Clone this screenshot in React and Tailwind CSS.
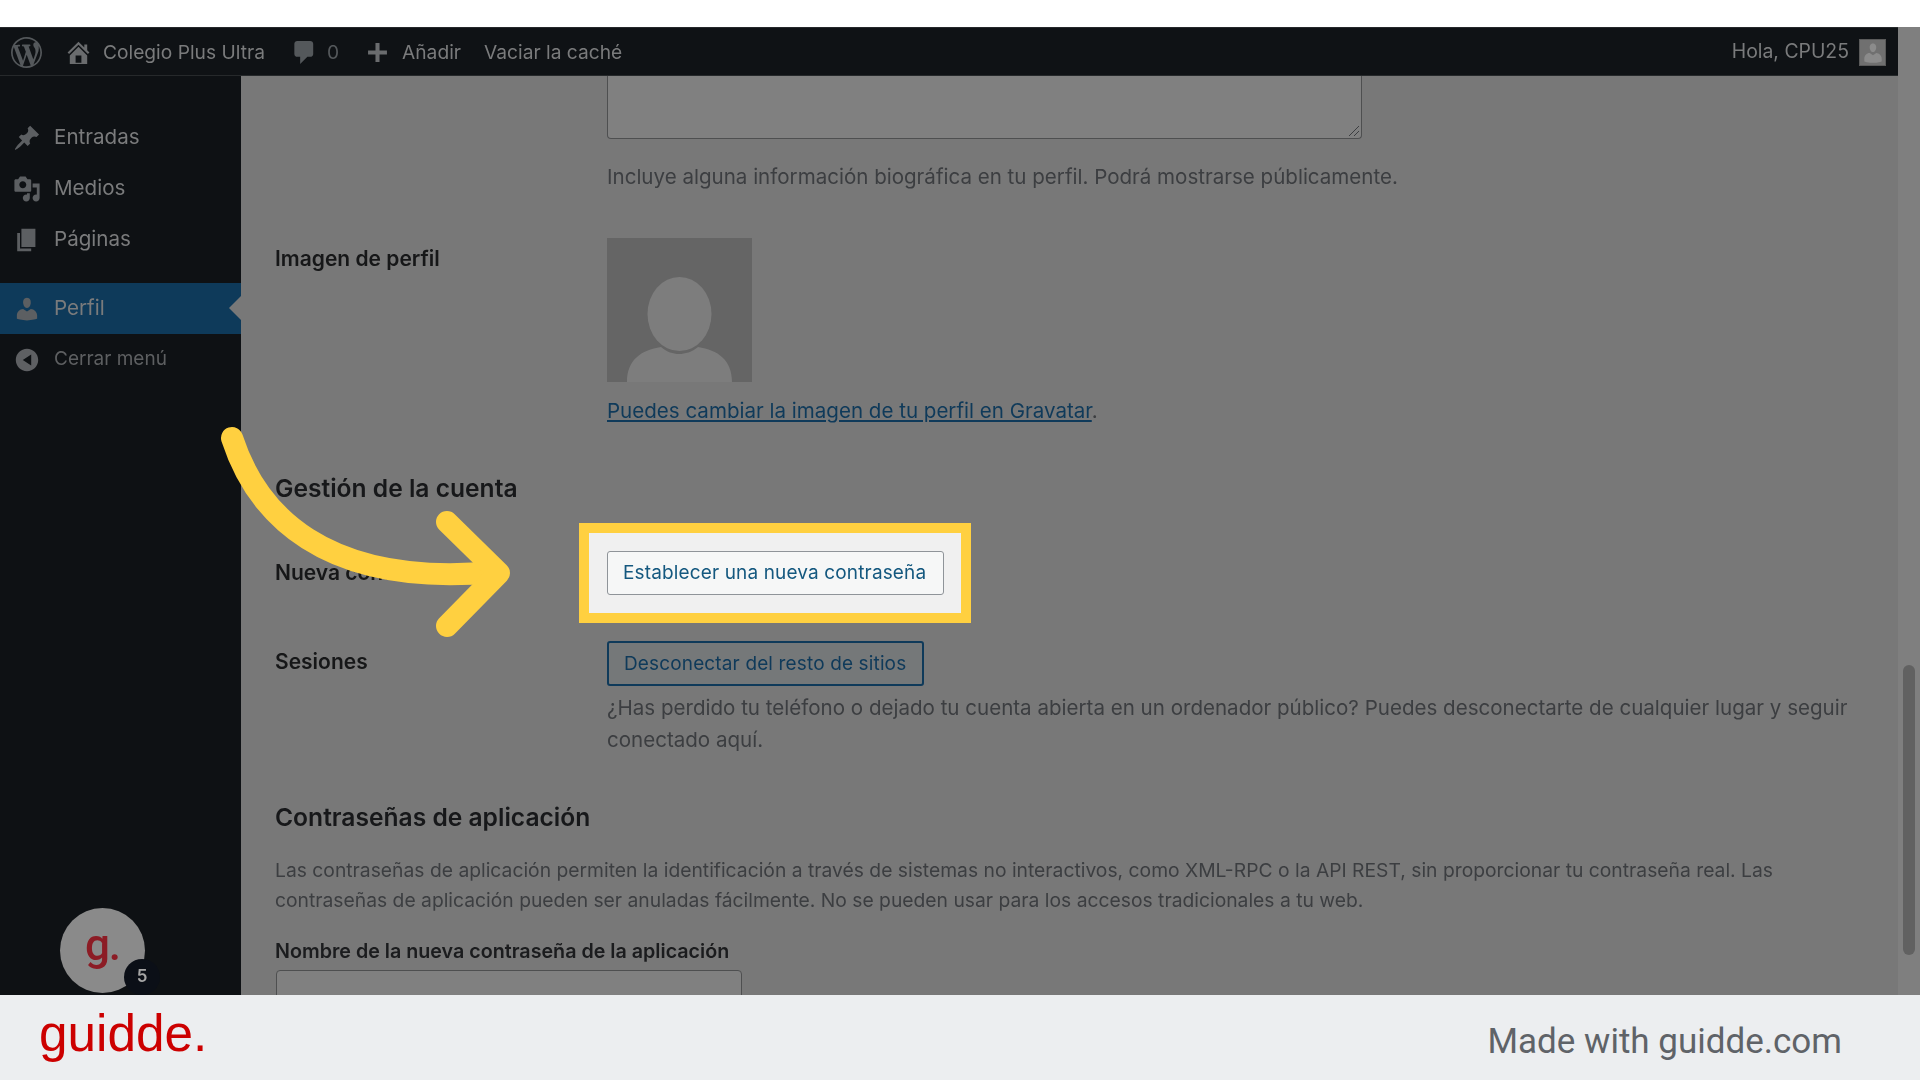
const D = ({ d, className }) => (
  <svg viewBox="0 0 20 20" className={className} fill="currentColor"><path d={d} /></svg>
);
const icons = {
  home: "M16 8.5l1.53 1.53-1.06 1.06L10 4.62l-6.47 6.47-1.06-1.06L10 2.5l4 4v-2h2v4zm-6-2.46l6 5.99V18H4v-5.97zM12 17v-5H8v5h4z",
  comment: "M5 2h9c1.1 0 2 .9 2 2v7c0 1.1-.9 2-2 2h-2l-5 5v-5H5c-1.1 0-2-.9-2-2V4c0-1.1.9-2 2-2z",
  plus: "M17 8.5v3h-5.500V17h-3v-5.500H3v-3h5.500V3h3v5.500H17z",
  post: "M10.44 3.02l1.82-1.82 6.36 6.35-1.83 1.82c-1.05-.68-2.48-.57-3.41.36l-.75.75c-.92.93-1.04 2.35-.35 3.41l-1.83 1.82-2.41-2.41-2.8 2.79c-.42.42-3.38 2.71-3.8 2.29s1.86-3.39 2.28-3.81l2.79-2.79L4.1 9.36l1.83-1.82c1.05.69 2.48.57 3.4-.36l.75-.75c.93-.92 1.05-2.35.36-3.41z",
  media: "M13 11V4c0-.55-.45-1-1-1h-1.67L9 1H5L3.67 3H2c-.55 0-1 .45-1 1v7c0 .55.45 1 1 1h10c.55 0 1-.45 1-1zM7 4.5c1.38 0 2.5 1.12 2.5 2.5S8.38 9.5 7 9.5 4.5 8.38 4.5 7 5.62 4.5 7 4.5zM14 6h5v10.5c0 1.38-1.12 2.5-2.5 2.5S14 17.88 14 16.5s1.12-2.5 2.5-2.5c.17 0 .34.02.5.05V9h-3V6zm-4 8.05V13h2v3.5c0 1.38-1.12 2.5-2.5 2.5S7 17.88 7 16.5 8.12 14 9.5 14c.17 0 .34.02.5.05z",
  page: "M6 15V2h10v13H6zm-1 1h8v2H3V5h2v11z",
  user: "M10 9.25c-2.27 0-2.73-3.44-2.73-3.44C7 4.02 7.82 2 9.97 2c2.16 0 2.98 2.02 2.71 3.81 0 0-.41 3.44-2.68 3.44zm0 2.57L12.72 10c2.39 0 4.52 2.33 4.52 4.53v2.49s-3.65 1.13-7.24 1.13c-3.65 0-7.24-1.13-7.24-1.13v-2.49c0-2.25 1.94-4.53 4.47-4.53z",
  collapse: "M18 10c0-4.42-3.58-8-8-8s-8 3.58-8 8 3.58 8 8 8 8-3.58 8-8zm-5-4v8l-6-4z",
};

const Wp = ({ className }) => (
  <svg viewBox="0 0 20 20" className={className} fill="currentColor">
    <path d="M20 10c0-5.510-4.490-10-10-10C4.480 0 0 4.490 0 10c0 5.520 4.480 10 10 10 5.510 0 10-4.480 10-10zM7.780 15.370L4.370 6.220c.550-.020 1.170-.080 1.170-.080.500-.060.440-1.130-.060-1.110 0 0-1.450.110-2.370.110-.180 0-.370 0-.580-.010C4.120 2.690 6.890 1.050 10 1.050c2.320 0 4.430.870 6.020 2.340-.680-.110-1.650.390-1.650 1.580 0 .740.450 1.360.900 2.100.350.610.550 1.360.550 2.460 0 1.490-1.400 5-1.400 5l-3.030-8.370c.540-.020.820-.170.820-.170.500-.050.440-1.250-.060-1.220 0 0-1.440.120-2.380.120-.870 0-2.330-.120-2.330-.120-.500-.030-.560 1.200-.060 1.220l.920.080 1.260 3.410zM17.410 10c.240-.640.740-1.870.430-4.250.700 1.290 1.050 2.710 1.050 4.250 0 3.290-1.730 6.240-4.400 7.780.970-2.590 1.940-5.200 2.920-7.780zM6.100 18.090C3.120 16.650 1.110 13.530 1.110 10c0-1.300.230-2.480.720-3.590C3.250 10.300 4.670 14.200 6.100 18.090zm4.030-6.630l2.580 6.980c-.860.290-1.760.450-2.710.450-.790 0-1.570-.110-2.290-.330.810-2.370 1.630-4.740 2.420-7.100z" />
  </svg>
);

function MenuItem({ icon, label, active, muted }) {
  return (
    <div className={`flex items-center h-[51px] pl-[13px] ${active ? "bg-[#0e3a5a] relative" : ""}`}>
      <D d={icons[icon]} className={`w-[28px] h-[28px] ${muted ? "text-[#5e6063]" : "text-[#5c5f62]"}`} />
      <span className={`ml-[13px] ${muted ? "text-[19px] text-[#5d5f61]" : "text-[20.6px] text-[#7a7b7c]"}`}>{label}</span>
      {active && (
        <span className="absolute right-0 top-[13px] w-0 h-0 border-y-[12px] border-y-transparent border-r-[12px] border-r-[#787878]" />
      )}
    </div>
  );
}

const Btn = ({ children, light }) => (
  <div className={`flex items-center px-[15px] pt-[1px] text-[19px] tracking-[0.14px] rounded-[3px] border whitespace-nowrap ${
    light ? "h-[44px] w-[337px] bg-[#f6f7f7] border-[#8f9499] text-[#14587f]" : "h-[45px] w-[317px] bg-[#757879] border-[#0f3a5a] border-2 text-[#0f3a5a]"
  }`}>{children}</div>
);

export default function App() {
  return (
    <div className="w-[1920px] h-[1080px] flex flex-col overflow-hidden bg-white font-['Inter',sans-serif]">
      <div className="h-[27px] shrink-0 bg-white" />
      <div className="flex h-[968px] shrink-0">
        <div className="w-[1898px] relative bg-[#787878]">
          <div className="flex flex-col h-full blur-[0.5px]">
            <div className="h-[49px] shrink-0 bg-[#0f1215] flex items-center text-[#7a7b7c] text-[19.2px] border-y border-[#26292b] pt-[1px]">
              <Wp className="w-[31px] h-[31px] ml-[11px] text-[#54585b]" />
              <D d={icons.home} className="w-[29px] h-[29px] ml-[22px] text-[#6a6c6e]" />
              <span className="ml-[10px]">Colegio Plus Ultra</span>
              <D d={icons.comment} className="w-[29px] h-[29px] ml-[25px] text-[#54585b]" />
              <span className="ml-[8px] text-[#54585b]">0</span>
              <D d={icons.plus} className="w-[27px] h-[27px] ml-[25px] text-[#6a6c6e]" />
              <span className="ml-[11px]">Añadir</span>
              <span className="ml-[23px]">Vaciar la caché</span>
              <span className="ml-auto text-[19.4px]">Hola, CPU25</span>
              <div className="ml-[10px] mr-[12px] w-[27px] h-[27px] bg-[#707070] border border-[#5a5a5a] flex items-end justify-center overflow-hidden">
                <D d={icons.user} className="w-[24px] h-[24px] text-[#8b8b8b]" />
              </div>
            </div>
            <div className="flex flex-1 min-h-0">
              <aside className="w-[241px] shrink-0 bg-[#0e1114] pt-[36px] relative">
                <MenuItem icon="post" label="Entradas" />
                <MenuItem icon="media" label="Medios" />
                <MenuItem icon="page" label="Páginas" />
                <div className="h-[18px]" />
                <MenuItem icon="user" label="Perfil" active />
                <MenuItem icon="collapse" label="Cerrar menú" muted />
                <div className="absolute left-[60px] top-[832px] w-[85px] h-[85px] rounded-full bg-[#8a8a8a] flex items-center justify-center text-[44px] leading-none font-medium text-[#8c1c25] font-['Roboto',sans-serif] pb-[12px] tracking-[-1px]">
                  g.
                </div>
                <div className="absolute left-[124px] top-[883px] w-[36px] h-[36px] rounded-full bg-[#0b0f17] flex items-center justify-center text-[17px] font-semibold text-[#a6a6a6]">
                  5
                </div>
              </aside>
              <main className="flex-1 bg-[#787878] overflow-hidden pl-[34px] text-[#3c3e41]">
                <div className="relative ml-[332px] w-[755px] h-[63px] bg-[#808080] border border-t-0 border-[#4e4f50] rounded-b-[4px]">
                  <svg viewBox="0 0 12 12" className="absolute right-[1px] bottom-[1px] w-[12px] h-[12px]" stroke="#3c3e41" strokeWidth="1" fill="none">
                    <path d="M1 11L11 1M6 11L11 6" />
                  </svg>
                </div>
                <p className="ml-[332px] mt-[25px] text-[20.55px] leading-[26px] whitespace-nowrap">
                  Incluye alguna información biográfica en tu perfil. Podrá mostrarse públicamente.
                </p>
                <div className="flex mt-[48px]">
                  <div className="w-[332px] pt-[8px] text-[21px] leading-[26px] font-semibold text-[#161718]">Imagen de perfil</div>
                  <div className="w-[145px] h-[144px] bg-[#656565] flex items-end justify-center overflow-hidden">
                    <svg viewBox="0 0 145 144" className="w-[145px] h-[144px]" fill="#7d7d7d">
                      <ellipse cx="72.500" cy="76" rx="32" ry="37" />
                      <path d="M20 144c0-22 14-32 34-35 6 5 12 7 18 7s13-2 19-7c20 3 34 13 34 35z" />
                    </svg>
                  </div>
                </div>
                <p className="ml-[332px] mt-[16px] text-[20.55px] leading-[26px] whitespace-nowrap">
                  <span className="text-[#0f3a5a] underline">Puedes cambiar la imagen de tu perfil en Gravatar</span>.
                </p>
                <h2 className="mt-[49px] text-[24.6px] leading-[30px] font-semibold text-[#17181a]">Gestión de la cuenta</h2>
                <div className="flex mt-[48px]">
                  <div className="w-[332px] pt-[9px] text-[21px] leading-[26px] font-semibold text-[#161718]">Nueva contraseña</div>
                  <div className="relative">
                    <div className="absolute left-[-28px] top-[-28px] w-[392px] h-[100px] border-[10px] border-[#ffd040] bg-[#f0f0f0]" />
                    <div className="relative"><Btn light>Establecer una nueva contraseña</Btn></div>
                  </div>
                </div>
                <div className="flex mt-[46px]">
                  <div className="w-[332px] pt-[8px] text-[21px] leading-[26px] font-semibold text-[#161718]">Sesiones</div>
                  <Btn>Desconectar del resto de sitios</Btn>
                </div>
                <p className="ml-[332px] mt-[6px] text-[20.55px] leading-[32px] whitespace-nowrap">
                  ¿Has perdido tu teléfono o dejado tu cuenta abierta en un ordenador público? Puedes desconectarte de cualquier lugar y seguir<br />conectado aquí.
                </p>
                <h2 className="mt-[46px] text-[24.6px] leading-[30px] font-semibold text-[#17181a]">Contraseñas de aplicación</h2>
                <p className="mt-[23px] text-[19.3px] leading-[30px] whitespace-nowrap">
                  Las contraseñas de aplicación permiten la identificación a través de sistemas no interactivos, como XML-RPC o la API REST, sin proporcionar tu contraseña real. Las<br />contraseñas de aplicación pueden ser anuladas fácilmente. No se pueden usar para los accesos tradicionales a tu web.
                </p>
                <div className="mt-[23px] text-[19.7px] leading-[26px] font-semibold text-[#1b1c1e]">Nombre de la nueva contraseña de la aplicación</div>
                <div className="mt-[6px] ml-[1px] w-[466px] h-[60px] bg-[#808080] border border-[#4e4f50] rounded-[4px]" />
              </main>
            </div>
          </div>
          <svg className="absolute left-0 top-0 w-[600px] h-[700px] pointer-events-none" viewBox="0 27 600 700" fill="none" stroke="#ffd040" strokeLinecap="round" strokeLinejoin="round" strokeWidth="22">
            <path d="M232 438C256 512 322 588 495 572" />
            <path d="M447 522L499 573L447 626" />
          </svg>
        </div>
        <div className="w-[22px] shrink-0 bg-[#7f7f7f] pt-[638px] pl-[5px]">
          <div className="w-[12px] h-[290px] rounded-full bg-[#616161]" />
        </div>
      </div>
      <footer className="h-[85px] shrink-0 bg-[#eceef0] flex items-center pl-[39px] pr-[78px]">
        <span className="text-[#cc0000] text-[51.3px] leading-none font-['Liberation_Sans',sans-serif] -mt-[8px]">guidde.</span>
        <span className="ml-auto text-[#5f6368] text-[35px] leading-none font-['Roboto',sans-serif] mt-[8px]">Made with guidde.com</span>
      </footer>
    </div>
  );
}
